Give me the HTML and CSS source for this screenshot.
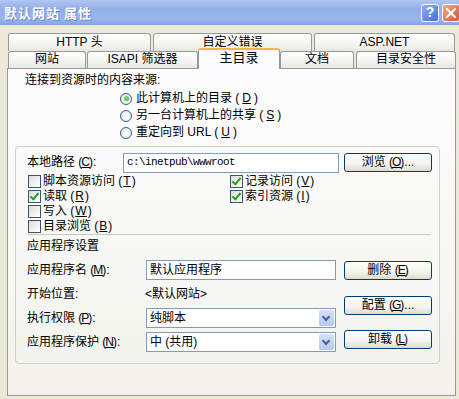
FILE: index.html
```html
<!DOCTYPE html>
<html lang="zh-CN">
<head>
    <meta charset="UTF-8">
    <title>默认网站 属性</title>
    <link rel="stylesheet" href="styles.css">
</head>
<body>
    <div class="window">
        <div class="titlebar">
            <span class="title">默认网站&nbsp;属性</span>
            <div class="title-buttons">
                <span class="tb-btn help">?</span>
                <span class="tb-btn close">
                    <svg width="12" height="12" viewBox="0 0 12 12"><path d="M2 2 L10 10 M10 2 L2 10" stroke="#fff" stroke-width="2.2" stroke-linecap="round"/></svg>
                </span>
            </div>
        </div>

        <div class="dialog">
            <!-- Tabs -->
            <div class="tab-row back">
                <div class="tab w-http">HTTP 头</div>
                <div class="tab w-err">自定义错误</div>
                <div class="tab w-asp">ASP.NET</div>
            </div>
            <div class="tab-row front">
                <div class="tab w-site">网站</div>
                <div class="tab w-isapi">ISAPI 筛选器</div>
                <div class="tab selected w-home">主目录</div>
                <div class="tab w-doc">文档</div>
                <div class="tab w-sec">目录安全性</div>
            </div>

            <!-- Panel -->
            <div class="panel">
                <div class="source-label">连接到资源时的内容来源:</div>
                <div class="radios">
                    <div class="radio-row"><span class="radio checked"></span>此计算机上的目录 (<u>D</u>)</div>
                    <div class="radio-row"><span class="radio"></span>另一台计算机上的共享 (<u>S</u>)</div>
                    <div class="radio-row"><span class="radio"></span>重定向到 URL (<u>U</u>)</div>
                </div>

                <div class="groupbox">
                    <div class="path-row">
                        <span class="path-label">本地路径 (<u>C</u>):</span>
                        <span class="textbox path">c:\inetpub\wwwroot</span>
                        <span class="button">浏览 (<u>O</u>)...</span>
                    </div>

                    <div class="checks">
                        <div class="check-col left">
                            <div class="check-row"><span class="checkbox"></span>脚本资源访问 (<u>T</u>)</div>
                            <div class="check-row"><span class="checkbox on"></span>读取 (<u>R</u>)</div>
                            <div class="check-row"><span class="checkbox"></span>写入 (<u>W</u>)</div>
                            <div class="check-row"><span class="checkbox"></span>目录浏览 (<u>B</u>)</div>
                        </div>
                        <div class="check-col">
                            <div class="check-row"><span class="checkbox on"></span>记录访问 (<u>V</u>)</div>
                            <div class="check-row"><span class="checkbox on"></span>索引资源 (<u>I</u>)</div>
                        </div>
                    </div>

                    <div class="separator"></div>
                    <div class="section-title">应用程序设置</div>

                    <div class="app">
                        <div class="app-fields">
                            <div class="app-row">
                                <span class="app-label">应用程序名 (<u>M</u>):</span>
                                <span class="textbox app-box">默认应用程序</span>
                            </div>
                            <div class="app-row">
                                <span class="app-label">开始位置:</span>
                                <span class="plain">&lt;默认网站&gt;</span>
                            </div>
                            <div class="app-row">
                                <span class="app-label">执行权限 (<u>P</u>):</span>
                                <span class="textbox app-box combo">纯脚本<span class="drop"></span></span>
                            </div>
                            <div class="app-row">
                                <span class="app-label">应用程序保护 (<u>N</u>):</span>
                                <span class="textbox app-box combo">中 (共用)<span class="drop"></span></span>
                            </div>
                        </div>
                        <div class="app-buttons">
                            <span class="button b-remove">删除 (<u>E</u>)</span>
                            <span class="button b-config">配置 (<u>G</u>)...</span>
                            <span class="button b-unload">卸载 (<u>L</u>)</span>
                        </div>
                    </div>
                </div>
            </div>
        </div>
    </div>
</body>
</html>
```

FILE: styles.css
```css
body {
    margin: 0;
    width: 459px;
    height: 399px;
    overflow: hidden;
    font-family: "Liberation Sans", "Noto Sans CJK SC", sans-serif;
    font-size: 12px;
    line-height: 15px;
    color: #000;
    background: #ece9d8;
}
.window {
    display: flex;
    flex-direction: column;
    height: 399px;
}
u {
    text-decoration: underline;
    text-underline-offset: 1px;
    margin: 0 -1px;
}

/* title bar */
.titlebar {
    height: 25px;
    flex: none;
    display: flex;
    justify-content: space-between;
    align-items: center;
    padding-left: 4px;
    background: linear-gradient(#b0c6f2, #94aee8 35%, #9ab4ec 75%, #88a5e2);
}
.title {
    color: #fff;
    font-family: "Noto Sans CJK SC", sans-serif;
    font-weight: bold;
    font-size: 13px;
    letter-spacing: 1px;
    text-shadow: 1px 1px 0 #6a86c8;
}
.title-buttons {
    display: flex;
    gap: 3px;
    margin-right: -1px;
}
.tb-btn {
    width: 18px;
    height: 18px;
    box-sizing: border-box;
    border: 1px solid #fff;
    border-radius: 3px;
    display: flex;
    align-items: center;
    justify-content: center;
    color: #fff;
    font-weight: bold;
    font-size: 14px;
}
.help {
    background: linear-gradient(135deg, #8fb0f4, #3f6fdc);
}
.close {
    background: linear-gradient(135deg, #f0a48a, #d4583a);
}

/* dialog body */
.dialog {
    flex: 1;
    display: flex;
    flex-direction: column;
    padding: 8px 3px 3px 7px;
}
.tab-row {
    display: flex;
    padding-left: 1px;
}
.tab-row.back {
    height: 18px;
    gap: 2px;
}
.tab-row.front {
    height: 17px;
}
.tab {
    box-sizing: border-box;
    border: 1px solid #919b9c;
    border-bottom: none;
    border-radius: 3px 3px 0 0;
    background: linear-gradient(#ffffff, #f3f3ef 60%, #e8e7e0);
    text-align: center;
    line-height: 16px;
}
.tab-row.front .tab {
    line-height: 15px;
}
.w-http { width: 143px; }
.w-err { width: 159px; }
.w-asp { width: 141px; }
.w-site { width: 78px; margin-right: 1px; }
.w-isapi { width: 111px; }
.w-home { width: 82px; }
.w-doc { width: 74px; margin-right: 2px; }
.w-sec { width: 100px; }
.tab.selected {
    position: relative;
    z-index: 1;
    margin-top: -3px;
    height: 21px;
    border-top: 2px solid #f5b742;
    background: #fcfcfe;
    line-height: 17px;
    font-size: 13px;
}

.panel {
    flex: 1;
    box-sizing: border-box;
    border: 1px solid #919b9c;
    background: linear-gradient(#fcfcfe, #f6f6f2 70%, #f2f1ec);
    padding: 4px 0 0 7px;
}
.source-label {
    margin-left: 10px;
    height: 14px;
    line-height: 14px;
}
.radios {
    margin: 3px 0 0 105px;
}
.radio-row {
    height: 17px;
    line-height: 17px;
    display: flex;
    align-items: center;
    gap: 4px;
}
.radio {
    width: 12px;
    height: 12px;
    box-sizing: border-box;
    border: 1px solid #2f5c8c;
    border-radius: 50%;
    background: radial-gradient(circle at 60% 60%, #ffffff, #e2e2dc);
    display: flex;
    align-items: center;
    justify-content: center;
}
.radio.checked::after {
    content: "";
    width: 5px;
    height: 5px;
    border-radius: 50%;
    background: radial-gradient(circle at 40% 40%, #8ee08e, #21a121);
}

/* group box */
.groupbox {
    margin-top: 5px;
    width: 425px;
    height: 218px;
    box-sizing: border-box;
    border: 1px solid #d0d0bf;
    border-radius: 4px;
    padding: 5px 7px 0 11px;
}
.path-row {
    display: flex;
    align-items: center;
    height: 21px;
}
.path-label {
    width: 96px;
}
.textbox {
    box-sizing: border-box;
    height: 20px;
    border: 1px solid #7f9db9;
    background: #fff;
    display: flex;
    align-items: center;
    padding-left: 3px;
}
.path {
    width: 216px;
    font-family: "Liberation Mono", monospace;
    font-size: 11px;
    letter-spacing: -0.6px;
}
.button {
    width: 88px;
    height: 19px;
    box-sizing: border-box;
    border: 1px solid #003c74;
    border-radius: 3px;
    background: linear-gradient(#ffffff, #f3f2ec 60%, #dedbcf);
    display: flex;
    align-items: center;
    justify-content: center;
    flex: none;
}
.path-row .button {
    margin-left: 5px;
}

.checks {
    display: flex;
    margin-top: 1px;
    height: 60px;
}
.check-col.left {
    width: 202px;
}
.check-row {
    height: 15px;
    line-height: 15px;
    display: flex;
    align-items: center;
    gap: 2px;
    padding-left: 1px;
}
.checkbox {
    width: 13px;
    height: 13px;
    box-sizing: border-box;
    border: 1px solid #3b536c;
    background: linear-gradient(135deg, #dcdcd6, #ffffff);
    position: relative;
    flex: none;
}
.checkbox.on::after {
    content: "";
    position: absolute;
    left: 3px;
    top: 0px;
    width: 3px;
    height: 7px;
    border: solid #21a121;
    border-width: 0 2px 2px 0;
    transform: rotate(40deg);
}

.separator {
    margin: 0 2px 0 1px;
    border-top: 1px solid #c9c8bb;
}
.section-title {
    margin-top: 4px;
    height: 14px;
    line-height: 14px;
}

.app {
    display: flex;
    margin-top: 7px;
}
.app-fields {
    display: flex;
    flex-direction: column;
    gap: 4px;
}
.app-row {
    height: 20px;
    display: flex;
    align-items: center;
}
.app-label {
    width: 119px;
}
.app-box {
    width: 190px;
    position: relative;
}
.plain {
    margin-left: -1px;
}
.drop {
    position: absolute;
    right: 1px;
    top: 1px;
    width: 15px;
    height: 16px;
    border-radius: 2px;
    background: linear-gradient(#d4e0fc, #b4c8f6);
}
.drop::after {
    content: "";
    position: absolute;
    left: 4px;
    top: 4px;
    width: 4px;
    height: 4px;
    border: solid #4d6185;
    border-width: 0 2px 2px 0;
    transform: rotate(45deg);
}
.app-buttons {
    display: flex;
    flex-direction: column;
    margin-left: 8px;
}
.b-remove { margin-top: 1px; }
.b-config { margin-top: 16px; }
.b-unload { margin-top: 15px; }
```
